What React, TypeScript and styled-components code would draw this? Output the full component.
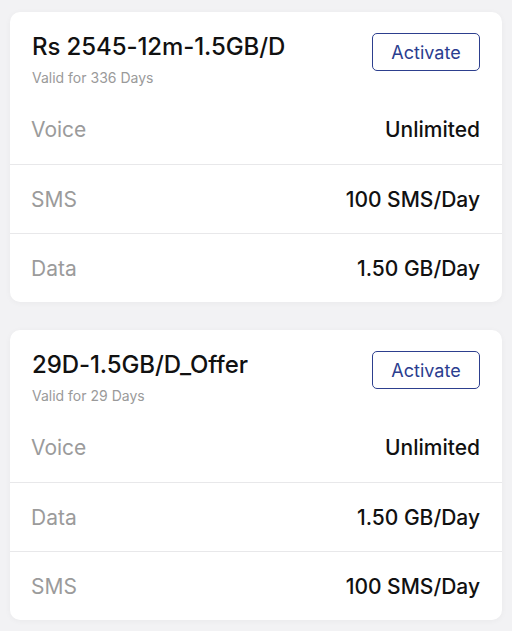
import React from 'react';
import styled, { createGlobalStyle } from 'styled-components';

const GlobalStyle = createGlobalStyle`
  html, body {
    margin: 0;
    padding: 0;
    background: #f2f2f4;
    font-family: Inter, "Liberation Sans", Arial, sans-serif;
  }
`;

const Page = styled.div`
  display: flex;
  flex-direction: column;
  gap: 28px;
  padding: 12px 10px 11px;
`;

const Card = styled.div`
  background: #fff;
  border-radius: 10px;
  box-shadow: 0 1px 6px rgba(0, 0, 0, 0.04);
  overflow: hidden;
`;

const Header = styled.div`
  display: flex;
  justify-content: space-between;
  align-items: flex-start;
  height: 83px;
  box-sizing: border-box;
  padding: 19px 22px 0 22px;
`;

const TitleBlock = styled.div`
  display: flex;
  flex-direction: column;
`;

const Title = styled.div`
  font-size: 24px;
  line-height: 32px;
  font-weight: 500;
  color: #111;
  letter-spacing: -0.1px;
`;

const Validity = styled.div`
  margin-top: 6px;
  font-size: 14px;
  line-height: 17px;
  color: #9a9a9a;
`;

const ActivateButton = styled.button`
  width: 108px;
  height: 38px;
  margin-top: 2px;
  border: 1px solid #2d3f8e;
  border-radius: 5px;
  background: #fff;
  color: #2b3d8f;
  font-family: inherit;
  font-size: 18px;
  font-weight: 400;
  cursor: pointer;
  padding: 0;
`;

const Row = styled.div<{ $first?: boolean }>`
  display: flex;
  justify-content: space-between;
  align-items: center;
  height: 69px;
  box-sizing: border-box;
  padding: 0 22px 0 21px;
  border-top: ${({ $first }) => ($first ? 'none' : '1px solid #e8e8ea')};
`;

const Label = styled.span`
  font-size: 21px;
  color: #9b9b9b;
`;

const Value = styled.span`
  font-size: 21px;
  font-weight: 500;
  color: #111;
`;

interface Plan {
  name: string;
  days: number;
  benefits: { label: string; value: string }[];
}

const plans: Plan[] = [
  {
    name: 'Rs 2545-12m-1.5GB/D',
    days: 336,
    benefits: [
      { label: 'Voice', value: 'Unlimited' },
      { label: 'SMS', value: '100 SMS/Day' },
      { label: 'Data', value: '1.50 GB/Day' },
    ],
  },
  {
    name: '29D-1.5GB/D_Offer',
    days: 29,
    benefits: [
      { label: 'Voice', value: 'Unlimited' },
      { label: 'Data', value: '1.50 GB/Day' },
      { label: 'SMS', value: '100 SMS/Day' },
    ],
  },
];

export default function App() {
  return (
    <>
      <GlobalStyle />
      <Page>
        {plans.map((plan) => (
          <Card key={plan.name}>
            <Header>
              <TitleBlock>
                <Title>{plan.name}</Title>
                <Validity>Valid for {plan.days} Days</Validity>
              </TitleBlock>
              <ActivateButton>Activate</ActivateButton>
            </Header>
            {plan.benefits.map((b, i) => (
              <Row key={b.label} $first={i === 0}>
                <Label>{b.label}</Label>
                <Value>{b.value}</Value>
              </Row>
            ))}
          </Card>
        ))}
      </Page>
    </>
  );
}
